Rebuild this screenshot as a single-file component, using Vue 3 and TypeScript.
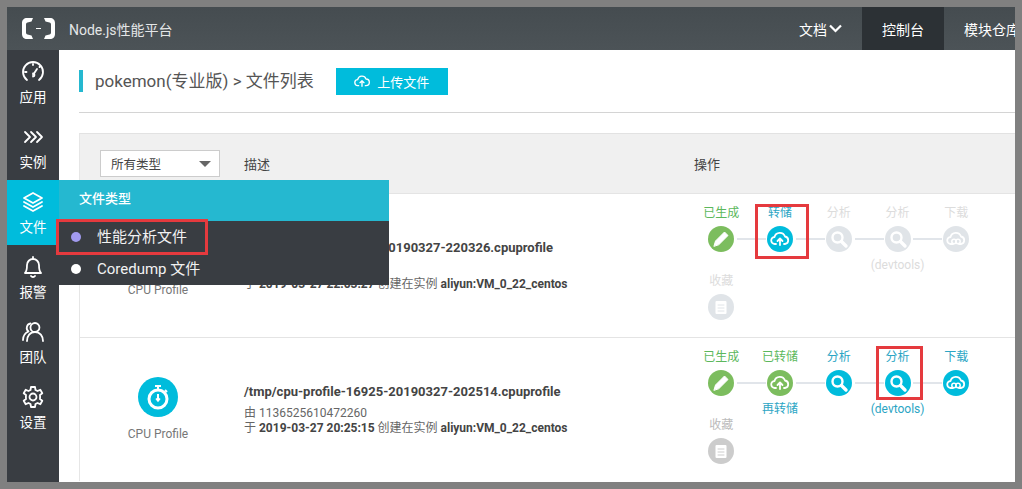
<template>
  <div class="frame">
    <div class="screen">
      <header class="topbar">
        <svg class="logo" width="33" height="21" viewBox="0 0 33 21" fill="#fff">
          <path d="M11 0H5C2 0 0 2 0 5v11c0 3 2 5 5 5h6l-1.500-3.500-4-1c-1-.3-1.500-1-1.500-2V6.500c0-1 .5-1.700 1.500-2l4-1z" />
          <path d="M22 0h6c3 0 5 2 5 5v11c0 3-2 5-5 5h-6l1.500-3.500 4-1c1-.3 1.500-1 1.500-2V6.500c0-1-.5-1.700-1.500-2l-4-1z" />
          <rect x="14" y="10" width="5" height="1" />
        </svg>
        <div class="brand">Node.js性能平台</div>
        <a class="top-link">文档<svg width="13" height="9" viewBox="0 0 13 9" fill="none" stroke="#fff" stroke-width="2.200"><path d="M1 1.500l5.500 5.500L12 1.500" /></svg></a>
        <a class="top-link active">控制台</a>
        <a class="top-link">模块仓库(beta)</a>
      </header>

      <div class="body">
        <aside class="sidebar">
          <div v-for="item in navItems" :key="item.label" class="nav-item" :class="{ active: item.active }">
            <svg width="24" height="24" viewBox="0 0 24 24" fill="none" stroke="#fff" stroke-width="1.800" stroke-linecap="round" stroke-linejoin="round">
              <path v-for="d in item.paths" :key="d" :d="d" />
            </svg>
            <span>{{ item.label }}</span>
            <div v-if="item.active" class="flyout">
              <div class="flyout-head">文件类型</div>
              <div class="flyout-row"><i class="dot purple"></i>性能分析文件</div>
              <div class="flyout-row"><i class="dot"></i>Coredump 文件</div>
            </div>
          </div>
        </aside>

        <main class="main">
          <div class="page-head">
            <h2>pokemon(专业版) &gt; 文件列表</h2>
            <button class="upload">
              <svg width="16" height="14" viewBox="0 0 24 20" fill="none" stroke="#fff" stroke-width="2" stroke-linecap="round" stroke-linejoin="round">
                <path d="M7 17H6a4.500 4.500 0 0 1-.5-9A6.500 6.500 0 0 1 18 7a5 5 0 0 1 0 10h-1" />
                <path d="M12 18v-8M9 12.500L12 9.500l3 3" />
              </svg>
              上传文件
            </button>
          </div>

          <section class="panel">
            <div class="table-head">
              <div class="select">所有类型<i class="caret"></i></div>
              <div class="col-desc">描述</div>
              <div class="col-ops">操作</div>
            </div>

            <div v-for="file in files" :key="file.name" class="row">
              <div class="type">
                <div class="type-icon">
                  <svg width="24" height="26" viewBox="0 0 24 26" fill="none" stroke="#fff" stroke-width="3">
                    <path d="M9 2h6M12 2v3M19 6l2 2" stroke-width="2" />
                    <circle cx="12" cy="15" r="9" />
                    <path d="M12 10v6" stroke-width="2" />
                    <path d="M10 14.500l2 2.500 2-2.500" stroke-width="1.500" />
                  </svg>
                </div>
                <p>CPU Profile</p>
              </div>
              <div class="desc">
                <div class="file-name">{{ file.name }}</div>
                <div class="meta">由 1136525610472260</div>
                <div class="meta">于 <b>{{ file.time }}</b> 创建在实例 <b>aliyun:VM_0_22_centos</b></div>
              </div>
              <div class="steps">
                <div v-for="(step, i) in file.steps" :key="i" class="step" :class="[step.tone, { linked: i < 4 }]">
                  <div class="step-label">{{ step.label }}</div>
                  <div class="step-icon">
                    <svg width="20" height="20" viewBox="0 0 20 20" fill="none" stroke="#fff" stroke-width="2" stroke-linecap="round" stroke-linejoin="round">
                      <template v-if="step.icon === 'pen'">
                        <path d="M3 17l1.500-5L13.500 3l3.500 3.500-9 9z" fill="#fff" stroke-width="1" />
                      </template>
                      <template v-else-if="step.icon === 'up'">
                        <path d="M6 15H5a3.500 3.500 0 0 1-.5-7A5.500 5.500 0 0 1 15 7.500 3.800 3.800 0 0 1 15 15h-1" stroke-width="1.800" />
                        <path d="M10 16V10M7.500 12L10 9.500l2.500 2.500" stroke-width="1.800" />
                      </template>
                      <template v-else-if="step.icon === 'search'">
                        <circle cx="8.500" cy="8.500" r="5" stroke-width="2.400" />
                        <path d="M12.500 12.500l4.500 4.500" stroke-width="3.400" />
                      </template>
                      <template v-else-if="step.icon === 'link'">
                        <path d="M7 15H5a3.500 3.500 0 0 1-.5-7A5.500 5.500 0 0 1 15 7.500 3.800 3.800 0 0 1 15 15h-2" stroke-width="1.800" />
                        <circle cx="8" cy="12.500" r="2.200" stroke-width="1.500" />
                        <circle cx="12" cy="12.500" r="2.200" stroke-width="1.500" />
                      </template>
                      <template v-else>
                        <rect x="4.500" y="4" width="11" height="13" rx="1" fill="#fff" stroke="none" />
                        <path d="M7 8h6M7 11h6M7 14h6M8 3h4" stroke="currentColor" stroke-width="1" />
                      </template>
                    </svg>
                  </div>
                  <div v-if="step.sub" class="step-sub">{{ step.sub }}</div>
                </div>
              </div>
            </div>
          </section>
        </main>
      </div>

      <!-- red boxes drawn on top of the screenshot -->
      <div class="mark mark-menu"></div>
      <div class="mark mark-save"></div>
      <div class="mark mark-dev"></div>
    </div>
  </div>
</template>

<script setup lang="ts">
type Step = { label: string; icon: string; tone: string; sub?: string }

const navItems = [
  {
    label: '应用',
    paths: [
      'M6 20a10 10 0 1 1 12 0',
      'M12 15l4-6',
      'M12 16.500a1.500 1.500 0 1 0 0-3',
      'M5.500 12H4M12 5V4M18.500 7l1-1'
    ]
  },
  { label: '实例', paths: ['M4 7l5 5-5 5', 'M10 7l5 5-5 5', 'M16 7l5 5-5 5'] },
  {
    label: '文件',
    active: true,
    paths: ['M12 3l9 5-9 5-9-5z', 'M3 12l9 5 9-5', 'M3 16l9 5 9-5']
  },
  {
    label: '报警',
    paths: ['M12 2v2', 'M4 18c2-2 2-4 2-8a6 6 0 0 1 12 0c0 4 0 6 2 8z', 'M10 21a2.500 2.500 0 0 0 4 0']
  },
  {
    label: '团队',
    paths: [
      'M14 3a4.500 4.500 0 1 1-.1 9 4.500 4.500 0 0 1 .1-9z',
      'M6 21c0-5 3-9 8-9s8 4 8 9',
      'M9.500 3.500a4.500 4.500 0 0 0-2 8C4 13 2 16 2 20'
    ]
  },
  {
    label: '设置',
    paths: [
      'M12 8.500a3.500 3.500 0 1 1 0 7 3.500 3.500 0 0 1 0-7z',
      'M10 2h4l.5 3 2 1 2.800-1.200 2 3.400L19 10l.1 2-.1 2 2.300 1.800-2 3.400-2.800-1.200-2 1-.5 3h-4l-.5-3-2-1-2.800 1.200-2-3.400L5 14l-.1-2 .1-2-2.300-1.800 2-3.400L7.500 6l2-1z'
    ]
  }
]

const files: { name: string; time: string; steps: Step[] }[] = [
  {
    name: '/tmp/cpu-profile-9125-20190327-220326.cpuprofile',
    time: '2019-03-27 22:03:27',
    steps: [
      { label: '已生成', icon: 'pen', tone: 'done' },
      { label: '转储', icon: 'up', tone: 'ready' },
      { label: '分析', icon: 'search', tone: 'off' },
      { label: '分析', icon: 'search', tone: 'off', sub: '(devtools)' },
      { label: '下载', icon: 'link', tone: 'off' },
      { label: '收藏', icon: 'clip', tone: 'off' }
    ]
  },
  {
    name: '/tmp/cpu-profile-16925-20190327-202514.cpuprofile',
    time: '2019-03-27 20:25:15',
    steps: [
      { label: '已生成', icon: 'pen', tone: 'done' },
      { label: '已转储', icon: 'up', tone: 'done', sub: '再转储' },
      { label: '分析', icon: 'search', tone: 'ready' },
      { label: '分析', icon: 'search', tone: 'ready', sub: '(devtools)' },
      { label: '下载', icon: 'link', tone: 'ready' },
      { label: '收藏', icon: 'clip', tone: 'muted' }
    ]
  }
]
</script>

<style scoped>
.frame {
  width: 1022px;
  height: 489px;
  padding: 7px;
  box-sizing: border-box;
  background: #808080;
  font-family: Roboto, "Noto Sans CJK SC", sans-serif;
  color: #555;
}

.screen {
  position: relative;
  width: 1008px;
  height: 475px;
  overflow: hidden;
  background: #fff;
}

.topbar {
  display: flex;
  align-items: center;
  width: 1200px;
  height: 43px;
  background: linear-gradient(#454c50, #4c5357);
  color: #fff;
  font-size: 14px;
}

.logo {
  margin-left: 15px;
  flex-shrink: 0;
}

.brand {
  width: 710px;
  margin-left: 14px;
  color: #e4e6e7;
}

.top-link {
  display: flex;
  align-items: center;
  gap: 2px;
  height: 100%;
  padding: 0 20px;
}

.top-link.active {
  background: #2c3135;
}

.body {
  display: flex;
}

.sidebar {
  flex: 0 0 52px;
  height: 432px;
  background: #393d42;
}

.nav-item {
  position: relative;
  display: flex;
  flex-direction: column;
  align-items: center;
  height: 65px;
  padding-top: 10px;
  box-sizing: border-box;
  color: #fff;
  font-size: 13.500px;
  line-height: 20px;
}

.nav-item span {
  margin-top: 3px;
}

.nav-item.active {
  background: #00bcdc;
}

.flyout {
  position: absolute;
  top: 0;
  left: 100%;
  z-index: 2;
  width: 330px;
  height: 105px;
  background: #393d42;
}

.flyout-head {
  height: 41px;
  padding-left: 20px;
  background: #25b8d0;
  font-size: 13px;
  font-weight: 500;
  line-height: 37px;
}

.flyout-row {
  display: flex;
  align-items: center;
  height: 32px;
  padding-left: 12px;
  font-size: 15px;
  color: #f2f2f2;
}

.dot {
  width: 10px;
  height: 10px;
  margin-right: 16px;
  border-radius: 50%;
  background: #fff;
}

.dot.purple {
  background: #a29bf0;
}

.main {
  flex: 0 0 1100px;
  padding-left: 20px;
  box-sizing: border-box;
}

.page-head {
  display: flex;
  align-items: center;
  height: 62px;
  border-bottom: 1px solid #d4d4d4;
}

.page-head h2 {
  margin: 0;
  padding-left: 12px;
  border-left: 4px solid #25b8d0;
  font-size: 17px;
  font-weight: 400;
  line-height: 22px;
  color: #555;
}

.upload {
  display: flex;
  align-items: center;
  justify-content: center;
  gap: 7px;
  width: 112px;
  height: 27px;
  margin-left: 22px;
  border: 0;
  background: #00bcdc;
  color: #fff;
  font: inherit;
  font-size: 13px;
}

.panel {
  margin-top: 20px;
  border-left: 1px solid #e6e6e6;
  border-top: 1px solid #e2e2e2;
}

.table-head {
  display: flex;
  align-items: center;
  height: 59px;
  background: #f0f0f0;
  font-size: 13px;
  color: #444;
}

.select {
  display: flex;
  align-items: center;
  justify-content: space-between;
  width: 120px;
  height: 27px;
  margin-left: 20px;
  padding: 0 8px 0 10px;
  box-sizing: border-box;
  border: 1px solid #ccc;
  background: #fff;
  font-size: 12.500px;
}

.caret {
  width: 0;
  height: 0;
  border-left: 6px solid transparent;
  border-right: 6px solid transparent;
  border-top: 6px solid #666;
}

.col-desc {
  width: 450px;
  margin-left: 24px;
}

.row {
  display: flex;
  align-items: center;
  height: 144px;
  box-sizing: border-box;
  border-top: 1px solid #e4e4e4;
}

.type {
  flex: 0 0 164px;
  text-align: center;
  margin-left: -4px;
}

.type-icon {
  display: flex;
  align-items: center;
  justify-content: center;
  width: 40px;
  height: 40px;
  margin: 0 auto;
  border-radius: 50%;
  background: #00bcdc;
}

.type p {
  margin: 9px 0 0;
  font-size: 12px;
  line-height: 16px;
  color: #777;
}

.desc {
  flex: 0 0 448px;
  margin-left: 4px;
  font-size: 12px;
  line-height: 15px;
  color: #666;
}

.file-name {
  margin-bottom: 6px;
  font-size: 13px;
  font-weight: 700;
  line-height: 16px;
  color: #444;
}

.meta b {
  color: #444;
  font-weight: 700;
}

.steps {
  display: flex;
  flex-wrap: wrap;
  align-self: flex-start;
  width: 294px;
  padding-top: 11px;
}

.step {
  position: relative;
  flex: 0 0 58.750px;
  height: 68px;
  text-align: center;
  font-size: 12px;
  line-height: 16px;
}

.step.linked::after {
  content: "";
  position: absolute;
  top: 33px;
  left: 45px;
  width: 29px;
  height: 2px;
  background: #e1e5ea;
}

.step:nth-child(n + 6)::after {
  display: none;
}

.step-icon {
  display: flex;
  align-items: center;
  justify-content: center;
  width: 26px;
  height: 26px;
  margin: 5px auto;
  border-radius: 50%;
}

.step-sub {
  white-space: nowrap;
}

.done .step-label {
  color: #5cb85c;
}

.done .step-icon {
  background: #7cbd5e;
  color: #7cbd5e;
}

.ready .step-label,
.step-sub {
  color: #2ba5c4;
}

.ready .step-icon {
  background: #00bcdc;
  color: #00bcdc;
}

.off .step-label,
.off .step-sub {
  color: #dcdcdc;
}

.off .step-icon {
  background: #e0e4e8;
  color: #e0e4e8;
}

.muted .step-label {
  color: #bbb;
}

.muted .step-icon {
  background: #ccc;
  color: #ccc;
}

.mark {
  position: absolute;
  z-index: 3;
  box-sizing: border-box;
  border: 3px solid #e53a3e;
}

.mark-menu {
  left: 49px;
  top: 212px;
  width: 152px;
  height: 36px;
}

.mark-save {
  left: 748px;
  top: 197px;
  width: 54px;
  height: 55px;
}

.mark-dev {
  left: 869px;
  top: 339px;
  width: 47px;
  height: 54px;
}
</style>
